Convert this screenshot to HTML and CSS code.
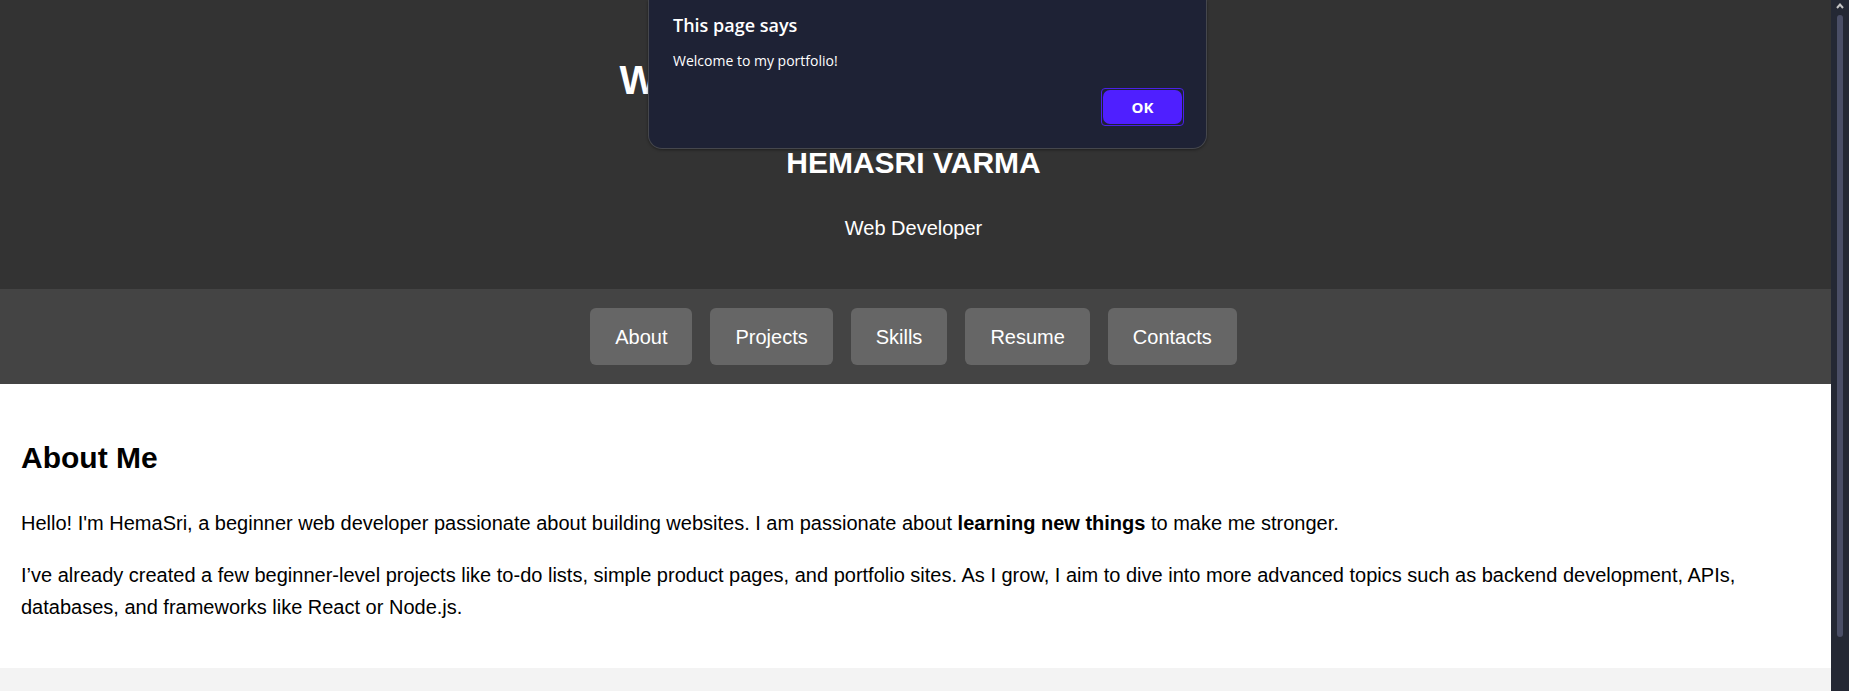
FILE: index.html
```html
<!DOCTYPE html>
<html lang="en">
<head>
<meta charset="utf-8">
<title>Hemasri Varma - Portfolio</title>
<link rel="stylesheet" href="styles.css">
</head>
<body>
<div class="page">
  <header class="header">
    <h1 class="title">Welcome to my Portfolio Page!</h1>
    <h2 class="name">HEMASRI VARMA</h2>
    <p class="role">Web Developer</p>
  </header>
  <nav class="nav">
    <a class="nav-link" href="#about">About</a>
    <a class="nav-link" href="#projects">Projects</a>
    <a class="nav-link" href="#skills">Skills</a>
    <a class="nav-link" href="#resume">Resume</a>
    <a class="nav-link" href="#contacts">Contacts</a>
  </nav>
  <section class="about" id="about">
    <h2 class="about-title">About Me</h2>
    <p class="about-text">Hello! I'm HemaSri, a beginner web developer passionate about building websites. I am passionate about <strong>learning new things</strong> to make me stronger.</p>
    <p class="about-text">I’ve already created a few beginner-level projects like to-do lists, simple product pages, and portfolio sites. As I grow, I aim to dive into more advanced topics such as backend development, APIs, databases, and frameworks like React or Node.js.</p>
  </section>
  <section class="projects" id="projects"></section>
</div>
<div class="scrollbar" aria-hidden="true">
  <svg class="scroll-arrow" width="8" height="6" viewBox="0 0 8 6"><path d="M1 5 4 1.5 7 5" fill="none" stroke="#c4c4c4" stroke-width="2"/></svg>
  <div class="scroll-thumb"></div>
</div>
<dialog class="alert" open aria-labelledby="alert-title">
  <h2 class="alert-title" id="alert-title">This page says</h2>
  <p class="alert-text">Welcome to my portfolio!</p>
  <form class="alert-actions" method="dialog">
    <div class="focus-ring">
      <button class="alert-ok" type="submit">OK</button>
    </div>
  </form>
</dialog>
</body>
</html>
```
FILE: styles.css
```css
* {
  box-sizing: border-box;
}

body {
  margin: 0;
  display: flex;
  height: 100vh;
  overflow: hidden;
  font: 20px/32px Arial, "Liberation Sans", sans-serif;
  color: #000;
  background: #fff;
}

h1, h2, p {
  margin: 0;
}

.page {
  flex: 1;
  min-width: 0;
  display: flex;
  flex-direction: column;
}

.header {
  padding: 48px 4px 45px 0;
  background: #333;
  color: #fff;
  text-align: center;
}

.title {
  font-size: 40px;
  line-height: 64px;
}

.name {
  margin: 27px 0 25px;
  font-size: 30px;
  line-height: 48px;
}

.nav {
  display: flex;
  justify-content: center;
  gap: 18px;
  padding: 19px 4px 19px 0;
  background: #444;
}

.nav-link {
  padding: 13px 25px 12px;
  border-radius: 6px;
  background: #666;
  color: #fff;
  text-decoration: none;
}

.about {
  padding: 50px 21px 45px;
}

.about-title {
  margin-bottom: 25px;
  font-size: 30px;
  line-height: 48px;
}

.about-text + .about-text {
  margin-top: 20px;
}

.projects {
  flex: 1;
  background: #f3f3f3;
}

.scrollbar {
  display: flex;
  flex-direction: column;
  align-items: center;
  width: 18px;
  background: #242834;
}

.scroll-arrow {
  margin: 3px 0 6px;
}

.scroll-thumb {
  width: 6px;
  height: 90%;
  border-radius: 3px;
  background: #4a4e66;
}

.alert {
  position: absolute;
  top: 0;
  left: 648px;
  right: auto;
  width: 559px;
  margin: 0;
  padding: 13px 22px 22px 24px;
  border: 1px solid #45474d;
  border-top: 0;
  border-radius: 0 0 14px 14px;
  background: #1e2235;
  color: #fff;
  font-family: "Segoe UI", "Open Sans", sans-serif;
  box-shadow: 0 1px 3px rgba(0, 0, 0, 0.4);
}

.alert-title {
  font-size: 18px;
  font-weight: 600;
  line-height: 24px;
}

.alert-text {
  margin: 14px 0 17px;
  font-size: 14px;
  line-height: 20px;
}

.alert-actions {
  display: flex;
  justify-content: flex-end;
}

.focus-ring {
  display: flex;
  padding: 1px;
  border: 1px solid #4a20e8;
  border-radius: 4px;
}

.alert-ok {
  width: 79px;
  height: 34px;
  padding: 0;
  border: 0;
  border-radius: 7px;
  background: #4f1fff;
  color: #fff;
  font: 700 15px/20px "Segoe UI", "Open Sans", sans-serif;
}
```
